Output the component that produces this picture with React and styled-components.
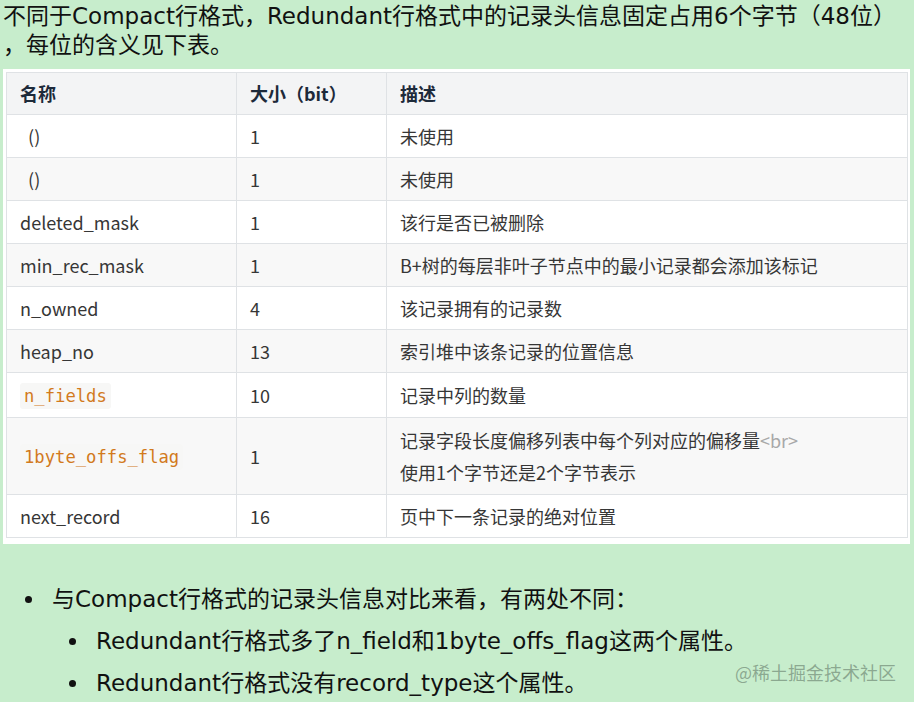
import React from "react";
import styled, { createGlobalStyle } from "styled-components";

const GlobalStyle = createGlobalStyle`
  html, body {
    margin: 0;
    padding: 0;
    background: #c7edcc;
  }
  body {
    font-family: "Noto Sans CJK SC", "Noto Sans", sans-serif;
  }
`;

const Page = styled.div`
  position: relative;
  width: 914px;
  height: 702px;
  overflow: hidden;
  box-sizing: border-box;
  padding: 2px 3px 0 3px;
  color: #111;
`;

const Para = styled.p`
  margin: 0;
  font-family: "DejaVu Sans", "Noto Sans CJK SC", sans-serif;
  font-size: 23px;
  line-height: 29px;
  color: #111;
  white-space: nowrap;
`;

const Panel = styled.div`
  margin-top: 9px;
  width: 907px;
  box-sizing: border-box;
  background: #fff;
  padding: 3px 3px 6px 3px;
`;

const Table = styled.table`
  width: 902px;
  table-layout: fixed;
  border-collapse: collapse;
  font-family: "Noto Sans CJK SC", "Noto Sans", sans-serif;
  font-size: 18px;
  color: #363636;
`;

const Th = styled.th`
  background: #f3f4f5;
  color: #1d2a3a;
  font-weight: 700;
  text-align: left;
  padding: 5px 13px;
  line-height: 31px;
  border: 1px solid #dfe2e5;
`;

const Tr = styled.tr`
  background: ${(p) => (p.$alt ? "#f8f8f8" : "#fff")};
`;

const Td = styled.td`
  padding: ${(p) => (p.$tall ? "6px 13px" : "5px 13px")};
  line-height: 32px;
  border: 1px solid #dfe2e5;
  vertical-align: middle;
`;

const Code = styled.code`
  font-family: "DejaVu Sans Mono", "Liberation Mono", monospace;
  font-size: 17.2px;
  color: #d27a1c;
  background: #f7f7f6;
  padding: 3px 4px;
  border-radius: 3px;
`;

const Tag = styled.span`
  color: #a8a8a8;
`;

const List = styled.ul`
  margin: 34px 0 0 0;
  padding: 0 0 0 49px;
  font-family: "DejaVu Sans", "Noto Sans CJK SC", sans-serif;
  font-size: 23px;
  line-height: 42px;
  color: #111;
  list-style: none;
`;

const SubList = styled.ul`
  margin: 0;
  padding: 0 0 0 44px;
  list-style: none;
`;

const Item = styled.li`
  position: relative;
  white-space: nowrap;
  &::before {
    content: "";
    position: absolute;
    left: -27px;
    top: 18px;
    width: 7px;
    height: 7px;
    border-radius: 50%;
    background: #111;
  }
`;

const Watermark = styled.div`
  position: absolute;
  left: 735px;
  top: 659px;
  font-size: 18px;
  line-height: 26px;
  color: rgba(80, 100, 85, 0.5);
  font-family: "Noto Sans CJK SC", sans-serif;
  white-space: nowrap;
`;

const rows = [
  { name: "()", size: "1", desc: "未使用", pad: true },
  { name: "()", size: "1", desc: "未使用", pad: true },
  { name: "deleted_mask", size: "1", desc: "该行是否已被删除" },
  { name: "min_rec_mask", size: "1", desc: "B+树的每层非叶子节点中的最小记录都会添加该标记" },
  { name: "n_owned", size: "4", desc: "该记录拥有的记录数" },
  { name: "heap_no", size: "13", desc: "索引堆中该条记录的位置信息" },
  { name: "n_fields", size: "10", desc: "记录中列的数量", code: true },
  { name: "1byte_offs_flag", size: "1", desc: null, code: true, tall: true },
  { name: "next_record", size: "16", desc: "页中下一条记录的绝对位置" },
];

export default function App() {
  return (
    <>
      <GlobalStyle />
      <Page>
        <Para>
          不同于Compact行格式，Redundant行格式中的记录头信息固定占用6个字节（48位）
          <br />，每位的含义见下表。
        </Para>
        <Panel>
          <Table>
            <colgroup>
              <col style={{ width: "230px" }} />
              <col style={{ width: "150px" }} />
              <col />
            </colgroup>
            <thead>
              <tr>
                <Th>名称</Th>
                <Th>大小（bit）</Th>
                <Th>描述</Th>
              </tr>
            </thead>
            <tbody>
              {rows.map((r, i) => (
                <Tr key={i} $alt={i % 2 === 1}>
                  <Td $tall={r.tall}>
                    {r.code ? <Code>{r.name}</Code> : r.pad ? <>&nbsp;&nbsp;{r.name}</> : r.name}
                  </Td>
                  <Td $tall={r.tall}>{r.size}</Td>
                  <Td $tall={r.tall}>
                    {r.desc ?? (
                      <>
                        记录字段长度偏移列表中每个列对应的偏移量<Tag>&lt;br&gt;</Tag>
                        <br />
                        使用1个字节还是2个字节表示
                      </>
                    )}
                  </Td>
                </Tr>
              ))}
            </tbody>
          </Table>
        </Panel>
        <List>
          <Item>
            与Compact行格式的记录头信息对比来看，有两处不同：
            <SubList>
              <Item>Redundant行格式多了n_field和1byte_offs_flag这两个属性。</Item>
              <Item>Redundant行格式没有record_type这个属性。</Item>
            </SubList>
          </Item>
        </List>
        <Watermark>@稀土掘金技术社区</Watermark>
      </Page>
    </>
  );
}
